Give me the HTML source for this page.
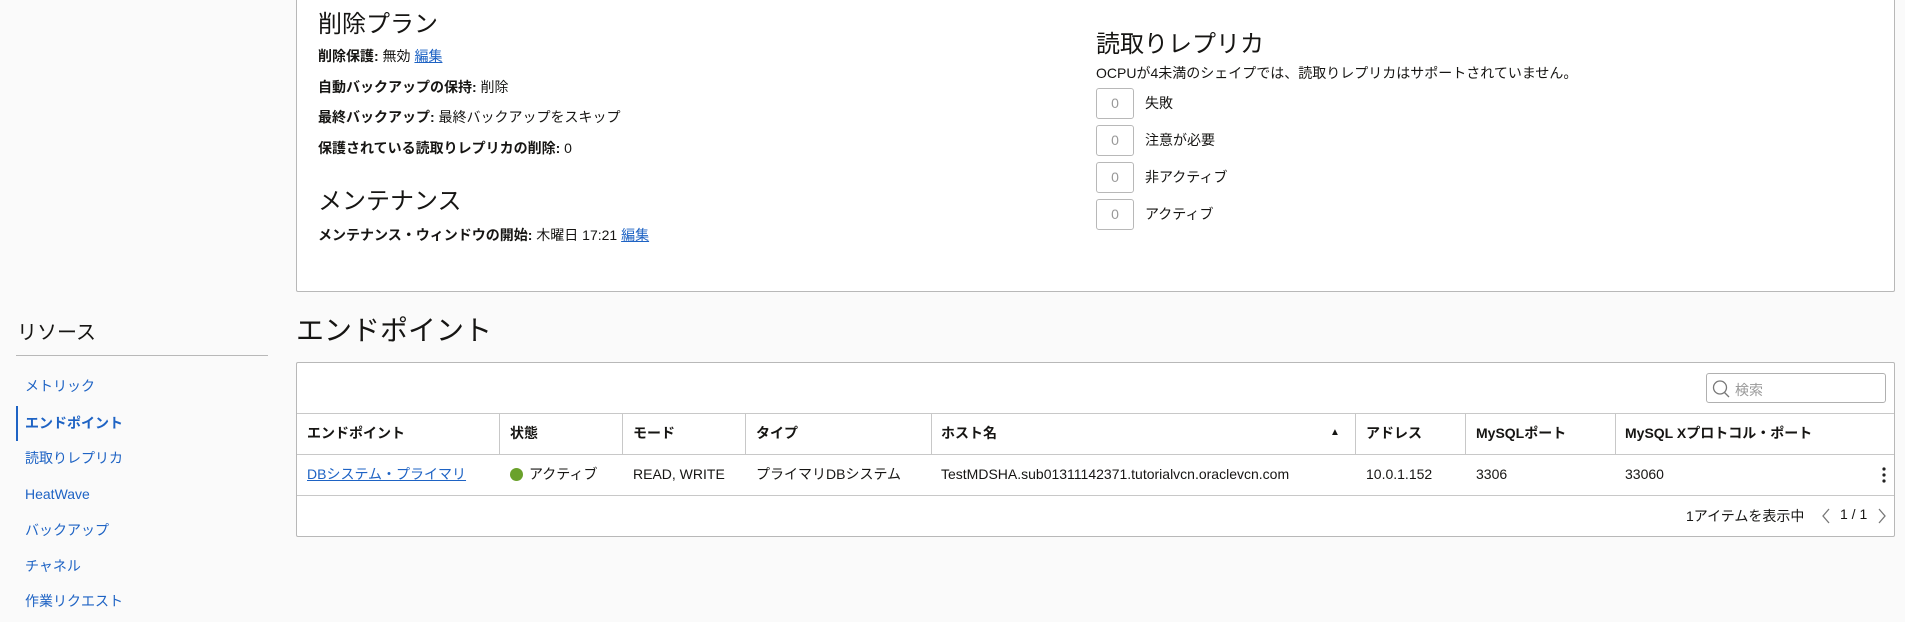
<!DOCTYPE html>
<html><head><meta charset="utf-8"><style>
*{box-sizing:border-box;margin:0;padding:0}
body{width:1905px;height:622px;overflow:hidden;background:#fafafa;font-family:"Liberation Sans","Noto Sans CJK JP",sans-serif;color:#161513;font-size:14px;position:relative}
.a{position:absolute;white-space:nowrap}
.card{position:absolute;background:#fff;border:1px solid #b8b8b8;border-radius:2px}
h2{font-weight:400;font-size:24px;position:absolute;white-space:nowrap}
b{font-weight:700}
a{color:#1e63c4;text-decoration:underline}
.row{position:absolute;left:318px;font-size:14px;line-height:18px}
.box{position:absolute;left:1096px;width:38px;height:31px;border:1px solid #b8b8b8;border-radius:3px;color:#999;text-align:center;line-height:29px;font-size:14px}
.bl{position:absolute;left:1145px;font-size:14px;line-height:31px}
.nav{position:absolute;left:25px;color:#1e63c4;font-size:14px;line-height:18px}
.vl{position:absolute;width:1px;background:#c8c8c8}
.hl{position:absolute;height:1px;background:#c8c8c8;left:297px;width:1597px}
.th{position:absolute;top:413px;height:41px;line-height:41px;font-weight:700;font-size:14px}
.td{position:absolute;top:454px;height:41px;line-height:41px;font-size:14px}
</style></head><body>
<div class="card" style="left:296px;top:-5px;width:1599px;height:297px"></div>
<h2 style="left:318px;top:4px">削除プラン</h2>
<div class="row" style="top:47px"><b>削除保護:</b> 無効 <a>編集</a></div>
<div class="row" style="top:78px"><b>自動バックアップの保持:</b> 削除</div>
<div class="row" style="top:108px"><b>最終バックアップ:</b> 最終バックアップをスキップ</div>
<div class="row" style="top:139px"><b>保護されている読取りレプリカの削除:</b> 0</div>
<h2 style="left:318px;top:181px">メンテナンス</h2>
<div class="row" style="top:226px"><b>メンテナンス・ウィンドウの開始:</b> 木曜日 17:21 <a>編集</a></div>

<h2 style="left:1096px;top:24px">読取りレプリカ</h2>
<div class="a" style="left:1096px;top:63px;font-size:14px">OCPUが4未満のシェイプでは、読取りレプリカはサポートされていません。</div>
<div class="box" style="top:88px">0</div><div class="bl" style="top:88px">失敗</div>
<div class="box" style="top:125px">0</div><div class="bl" style="top:125px">注意が必要</div>
<div class="box" style="top:162px">0</div><div class="bl" style="top:162px">非アクティブ</div>
<div class="box" style="top:199px">0</div><div class="bl" style="top:199px">アクティブ</div>

<div class="a" style="left:17px;top:316px;font-size:20px">リソース</div>
<div class="a" style="left:16px;top:355px;width:252px;height:1px;background:#b8b8b8"></div>
<div class="nav" style="top:377px">メトリック</div>
<div class="a" style="left:16px;top:406px;width:2px;height:35px;background:#1e63c4"></div>
<div class="nav" style="top:414px;font-weight:700">エンドポイント</div>
<div class="nav" style="top:449px">読取りレプリカ</div>
<div class="nav" style="top:485px">HeatWave</div>
<div class="nav" style="top:521px">バックアップ</div>
<div class="nav" style="top:557px">チャネル</div>
<div class="nav" style="top:592px">作業リクエスト</div>

<div class="a" style="left:296px;top:309px;font-size:28px">エンドポイント</div>
<div class="card" style="left:296px;top:362px;width:1599px;height:175px"></div>
<div class="a" style="left:1706px;top:373px;width:180px;height:30px;border:1px solid #b0b0b0;border-radius:3px;background:#fff"></div>
<svg class="a" style="left:1711px;top:379px" width="20" height="20" viewBox="0 0 20 20"><circle cx="9" cy="8.5" r="6.5" fill="none" stroke="#777" stroke-width="1.3"/><path d="M13.5 13.5L18 18" stroke="#777" stroke-width="1.3"/></svg>
<div class="a" style="left:1735px;top:380px;color:#999;font-size:14px">検索</div>
<div class="hl" style="top:413px"></div>
<div class="hl" style="top:454px"></div>
<div class="hl" style="top:495px"></div>
<div class="vl" style="left:499px;top:413px;height:41px"></div>
<div class="vl" style="left:622px;top:413px;height:41px"></div>
<div class="vl" style="left:745px;top:413px;height:41px"></div>
<div class="vl" style="left:931px;top:413px;height:41px"></div>
<div class="vl" style="left:1355px;top:413px;height:41px"></div>
<div class="vl" style="left:1465px;top:413px;height:41px"></div>
<div class="vl" style="left:1615px;top:413px;height:41px"></div>
<div class="th" style="left:307px">エンドポイント</div>
<div class="th" style="left:510px">状態</div>
<div class="th" style="left:633px">モード</div>
<div class="th" style="left:756px">タイプ</div>
<div class="th" style="left:941px">ホスト名</div>
<div class="a" style="left:1330px;top:427px;font-size:10px">▲</div>
<div class="th" style="left:1366px">アドレス</div>
<div class="th" style="left:1476px">MySQLポート</div>
<div class="th" style="left:1625px">MySQL Xプロトコル・ポート</div>
<div class="td" style="left:307px"><a>DBシステム・プライマリ</a></div>
<div class="a" style="left:510px;top:468px;width:13px;height:13px;border-radius:50%;background:#6aa12b"></div>
<div class="td" style="left:529px">アクティブ</div>
<div class="td" style="left:633px">READ, WRITE</div>
<div class="td" style="left:756px">プライマリDBシステム</div>
<div class="td" style="left:941px">TestMDSHA.sub01311142371.tutorialvcn.oraclevcn.com</div>
<div class="td" style="left:1366px">10.0.1.152</div>
<div class="td" style="left:1476px">3306</div>
<div class="td" style="left:1625px">33060</div>
<svg class="a" style="left:1881px;top:466px" width="6" height="18"><circle cx="3" cy="3" r="1.6" fill="#222"/><circle cx="3" cy="9" r="1.6" fill="#222"/><circle cx="3" cy="15" r="1.6" fill="#222"/></svg>
<div class="a" style="left:1686px;top:506px;font-size:14px">1アイテムを表示中</div>
<svg class="a" style="left:1820px;top:507px" width="12" height="18"><path d="M9 2L3 9l6 7" fill="none" stroke="#777" stroke-width="1.3"/></svg>
<div class="a" style="left:1840px;top:506px;font-size:14px">1 / 1</div>
<svg class="a" style="left:1876px;top:507px" width="12" height="18"><path d="M3 2l6 7-6 7" fill="none" stroke="#777" stroke-width="1.3"/></svg>
</body></html>
